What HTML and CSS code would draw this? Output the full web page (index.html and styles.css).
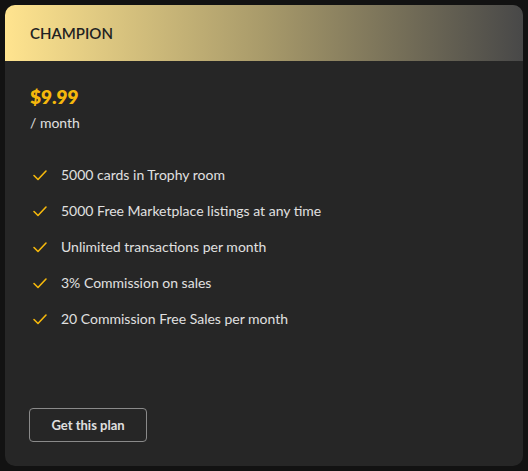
FILE: index.html
```html
<!DOCTYPE html>
<html>
<head>
<meta charset="utf-8">
<link rel="stylesheet" href="styles.css">
</head>
<body>
<div class="card">
  <div class="card-header">CHAMPION</div>
  <div class="card-body">
    <div class="price">$9.99</div>
    <div class="period">/ month</div>
    <ul class="features">
      <li><svg class="check" viewBox="0 0 16 16"><path d="M2 8.5l4 4L14 4"/></svg>5000 cards in Trophy room</li>
      <li><svg class="check" viewBox="0 0 16 16"><path d="M2 8.5l4 4L14 4"/></svg>5000 Free Marketplace listings at any time</li>
      <li><svg class="check" viewBox="0 0 16 16"><path d="M2 8.5l4 4L14 4"/></svg>Unlimited transactions per month</li>
      <li><svg class="check" viewBox="0 0 16 16"><path d="M2 8.5l4 4L14 4"/></svg>3% Commission on sales</li>
      <li><svg class="check" viewBox="0 0 16 16"><path d="M2 8.5l4 4L14 4"/></svg>20 Commission Free Sales per month</li>
    </ul>
    <button class="btn">Get this plan</button>
  </div>
</div>
</body>
</html>
```
FILE: styles.css
```css
html, body {
  margin: 0;
  background: #121212;
}
body {
  padding: 5px 5px 5px 5px;
  font-family: Lato, "Open Sans", sans-serif;
}
.card {
  width: 518px;
  height: 461px;
  background: #262626;
  border-radius: 10px;
  overflow: hidden;
  display: flex;
  flex-direction: column;
}
.card-header {
  height: 56px;
  flex: none;
  display: flex;
  align-items: center;
  padding-left: 25px;
  background: linear-gradient(90deg, #ffe48f 0%, #a89a6a 50%, #484848 100%);
  color: #222;
  font-size: 15px;
  font-weight: 600;
  letter-spacing: 0;
}
.card-body {
  flex: 1;
  display: flex;
  flex-direction: column;
  padding: 25px 25px 24px 25px;
}
.price {
  color: #f5b80c;
  font-size: 19px;
  font-weight: 800;
  line-height: 22px;
}
.period {
  color: #e0e0e0;
  font-size: 14px;
  line-height: 18px;
  margin-top: 6px;
}
.features {
  list-style: none;
  margin: 34px 0 0 0;
  padding: 0;
  display: flex;
  flex-direction: column;
  gap: 18px;
}
.features li {
  display: flex;
  align-items: center;
  color: #e0e0e0;
  font-size: 14px;
  line-height: 18px;
}
.check {
  width: 16px;
  height: 16px;
  margin-left: 2px;
  margin-right: 13px;
  fill: none;
  stroke: #f5b80c;
  stroke-width: 1.6;
  stroke-linecap: round;
  stroke-linejoin: round;
}
.btn {
  margin-top: auto;
  align-self: flex-start;
  width: 118px;
  height: 34px;
  background: transparent;
  border: 1px solid #8a8a8a;
  border-radius: 4px;
  color: #e0e0e0;
  font-family: inherit;
  font-size: 13px;
  font-weight: 700;
  margin-left: -1px;
}
```
